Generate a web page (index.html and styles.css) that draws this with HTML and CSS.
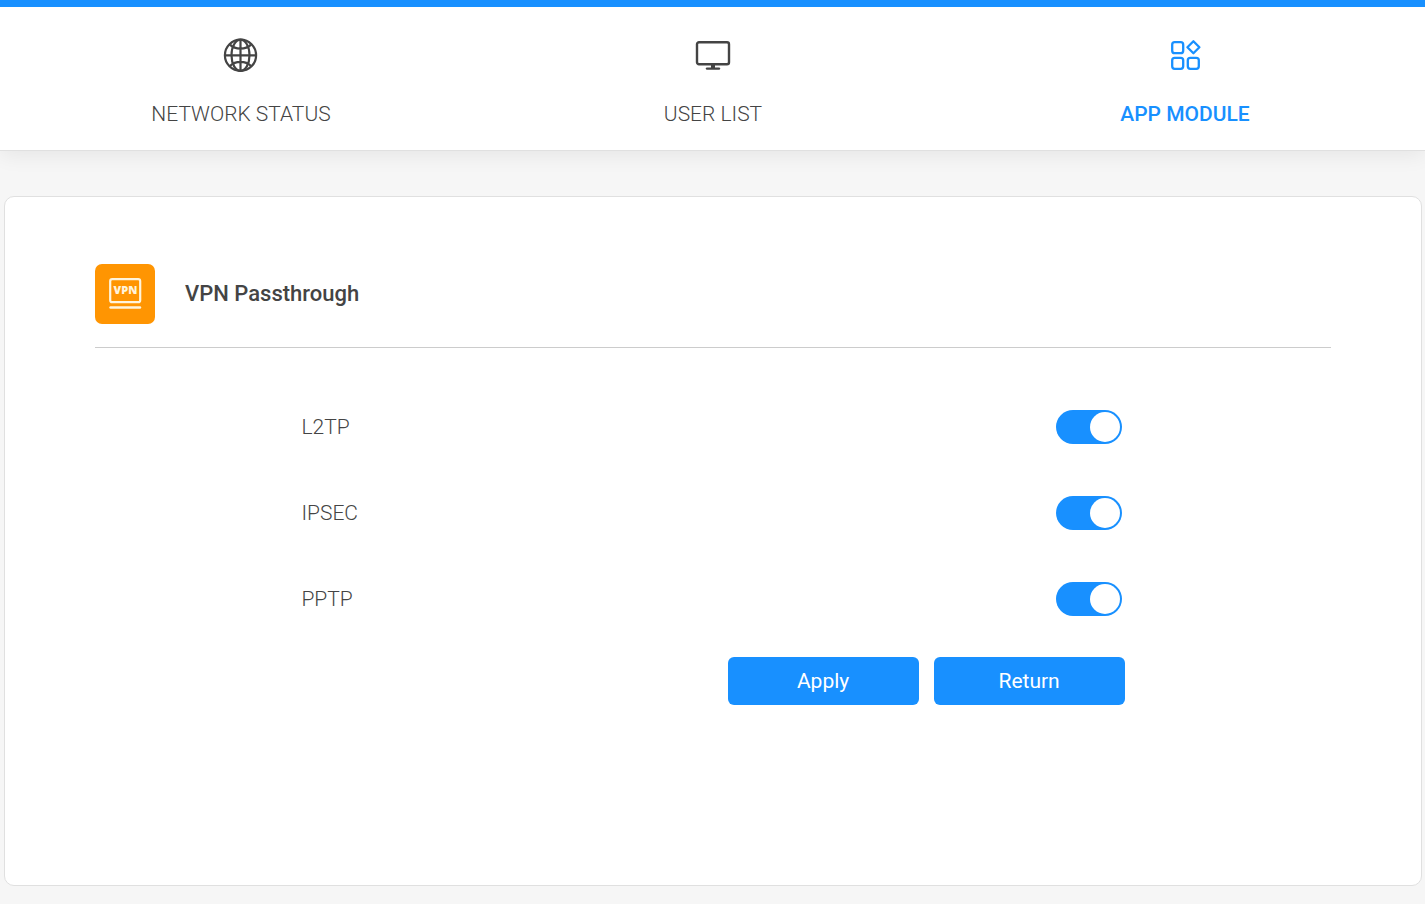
FILE: index.html
```html
<!DOCTYPE html>
<html lang="en">
<head>
    <meta charset="UTF-8">
    <meta name="viewport" content="width=device-width, initial-scale=1.0">
    <title>VPN Passthrough</title>
    <link rel="stylesheet" href="styles.css">
</head>
<body>
    <header class="header">
        <nav class="nav">
            <a href="#status" class="nav-item">
                <svg class="nav-icon" viewBox="0 0 36 36" fill="none" stroke="currentColor" stroke-width="2.2">
                    <circle cx="17.5" cy="18.3" r="15.6"/>
                    <ellipse cx="17.5" cy="18.3" rx="9" ry="15.6"/>
                    <path d="M17.5 2.7v31.2M2 18.3h31M7 7.6c5.500 5.400 15.500 5.400 21 0M7 29c5.500-5.400 15.500-5.400 21 0"/>
                </svg>
                <span>NETWORK STATUS</span>
            </a>
            <a href="#users" class="nav-item">
                <svg class="nav-icon" viewBox="0 0 36 36" fill="none" stroke="currentColor" stroke-width="2.4">
                    <rect x="2" y="5.2" width="32" height="22" rx="2"/>
                    <path d="M12 31.6h12" stroke-linecap="round"/>
                    <path d="M18 27v4" stroke-width="4"/>
                </svg>
                <span>USER LIST</span>
            </a>
            <a href="#apps" class="nav-item active">
                <svg class="nav-icon" viewBox="0 0 36 36" fill="none" stroke="currentColor" stroke-width="2.3" stroke-linejoin="round">
                    <rect x="5.2" y="5.2" width="11" height="11" rx="2.5"/>
                    <rect x="5.2" y="20.8" width="11" height="11" rx="2.5"/>
                    <rect x="20.8" y="20.8" width="11" height="11" rx="2.5"/>
                    <path d="M26.4 4.2l6 6-6 6-6-6z"/>
                </svg>
                <span>APP MODULE</span>
            </a>
        </nav>
    </header>

    <main class="card">
        <div class="card-title">
            <svg class="app-icon" viewBox="0 0 60 60">
                <rect width="60" height="60" rx="7" fill="#ff9502"/>
                <rect x="15.2" y="15.2" width="30" height="23" rx="2" fill="none" stroke="#fff4dc" stroke-width="2.2"/>
                <path d="M15.5 43.5h29.5" stroke="#fff4dc" stroke-width="2.4" stroke-linecap="round"/>
                <text class="app-icon-text" x="30.5" y="30" text-anchor="middle">VPN</text>
            </svg>
            <h1>VPN Passthrough</h1>
        </div>

        <form class="settings">
            <div class="row">
                <label for="l2tp">L2TP</label>
                <input type="checkbox" id="l2tp" class="switch" checked>
            </div>
            <div class="row">
                <label for="ipsec">IPSEC</label>
                <input type="checkbox" id="ipsec" class="switch" checked>
            </div>
            <div class="row">
                <label for="pptp">PPTP</label>
                <input type="checkbox" id="pptp" class="switch" checked>
            </div>
            <div class="buttons">
                <button type="button">Apply</button>
                <button type="button">Return</button>
            </div>
        </form>
    </main>
</body>
</html>
```
FILE: styles.css
```css
* {
    box-sizing: border-box;
}

body {
    margin: 0;
    min-height: 100vh;
    display: flex;
    flex-direction: column;
    background: #f6f6f6;
    color: #444;
    font-family: Roboto, "Liberation Sans", sans-serif;
    font-size: 21px;
    font-weight: 300;
    line-height: 28px;
}

.header {
    background: #fff;
    border-top: 7px solid #1890ff;
    border-bottom: 1px solid #e0e0e0;
    box-shadow: 0 4px 20px rgba(0, 0, 0, 0.07);
}

.nav {
    display: grid;
    grid-template-columns: repeat(3, 1fr);
    padding: 0 4px 0 5px;
}

.nav-item {
    display: flex;
    flex-direction: column;
    align-items: center;
    gap: 27px;
    padding: 30px 0 22px;
    color: #444;
    text-decoration: none;
}

.nav-item.active {
    color: #1890ff;
    font-weight: 500;
}

.nav-icon {
    width: 36px;
    height: 36px;
}

.card {
    flex: 1;
    margin: 45px 3px 18px 4px;
    padding: 67px 90px;
    background: #fff;
    border: 1px solid #e0e0e0;
    border-radius: 10px;
}

.card-title {
    display: flex;
    align-items: center;
    gap: 30px;
    padding-bottom: 23px;
    border-bottom: 1px solid #ccc;
}

.card-title h1 {
    margin: 0;
    font-size: 22px;
    font-weight: 500;
}

.app-icon {
    width: 60px;
    height: 60px;
}

.app-icon-text {
    fill: #fff4dc;
    font-family: "Open Sans", sans-serif;
    font-size: 11px;
    font-weight: 800;
}

.settings {
    display: flex;
    flex-direction: column;
    gap: 52px;
    width: 66.6%;
    margin: 62px auto 0;
}

.row {
    display: flex;
    align-items: center;
    justify-content: space-between;
    padding-right: 3px;
}

.switch {
    appearance: none;
    display: flex;
    justify-content: flex-end;
    width: 66px;
    height: 34px;
    margin: 0;
    padding: 2px;
    border-radius: 17px;
    background: #ccc;
    cursor: pointer;
}

.switch::before {
    content: "";
    width: 30px;
    height: 30px;
    border-radius: 50%;
    background: #fff;
}

.switch:checked {
    background: #1890ff;
}

.switch:not(:checked) {
    justify-content: flex-start;
}

.buttons {
    display: flex;
    justify-content: flex-end;
    gap: 15px;
    margin-top: -11px;
}

.buttons button {
    width: 191px;
    height: 48px;
    border: none;
    border-radius: 6px;
    background: #1890ff;
    color: #fff;
    font: inherit;
    font-weight: 400;
    cursor: pointer;
}
```
